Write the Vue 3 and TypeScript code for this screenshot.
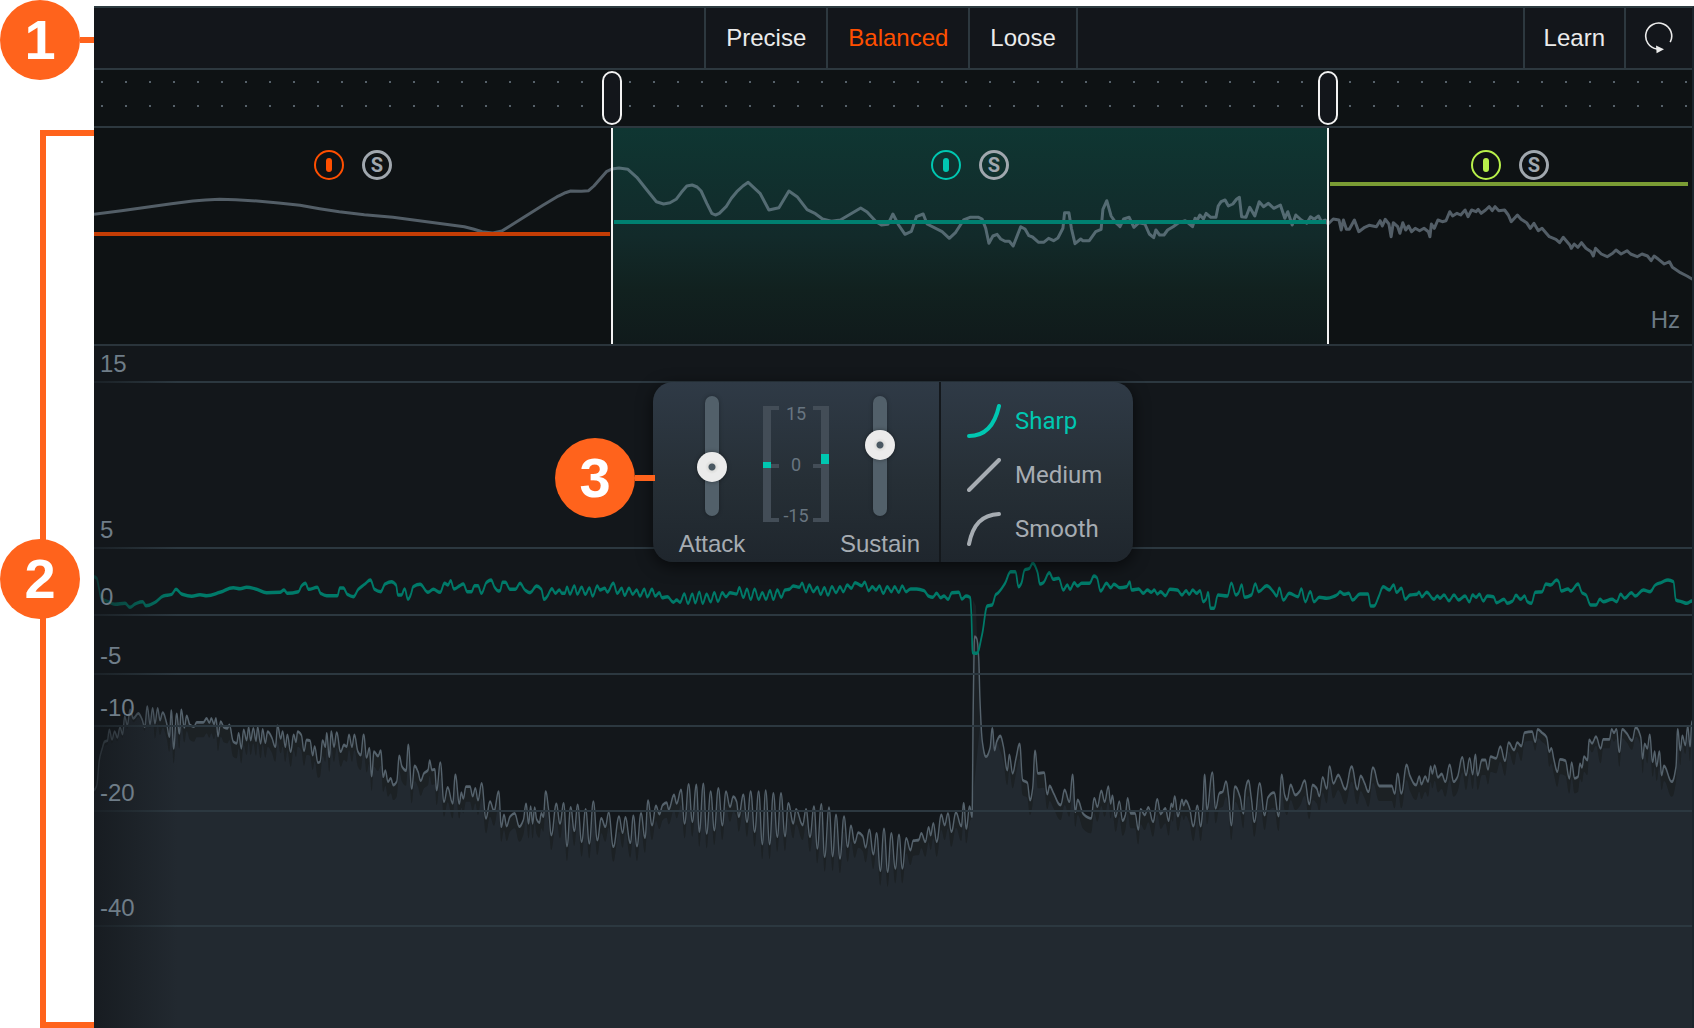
<script setup lang="ts">
import { ref } from 'vue'

interface TraceWindow {
  x: number
  y: number
  kx: number
  ky: number
  data: string
}
type Point = [number, number]

const modes = ['Precise', 'Balanced', 'Loose'] as const
const activeMode = ref<string>('Balanced')

const bands = [
  { name: 'Low', span: 518, color: '#ff4f00', line: '#c43d05', level: 104, selected: false },
  { name: 'Mid', span: 716, color: '#00c7b1', line: '#008070', level: 92, selected: true },
  { name: 'High', span: 364, color: '#b8f04a', line: '#7a9c34', level: 54, selected: false },
]
const totalSpan = bands.reduce((sum, b) => sum + b.span, 0)
const crossovers = [518, 1234].map((v) => (v / totalSpan) * 100)

const gridRows = [
  { label: '15', span: 37 },
  { label: '5', span: 166 },
  { label: '0', span: 67 },
  { label: '-5', span: 59 },
  { label: '-10', span: 52 },
  { label: '-20', span: 85 },
  { label: '-40', span: 115 },
]
const rowTemplate = [...gridRows.map((r) => r.span), 101].map((n) => `minmax(0, ${n}fr)`).join(' ')

const attack = ref(-3.7)
const sustain = ref(3.7)
const shapes = [
  { name: 'Sharp', path: 'M2 32 C19 32 28 20 32 2' },
  { name: 'Medium', path: 'M2 32 L32 2' },
  { name: 'Smooth', path: 'M2 32 C6 12 15 3 32 2' },
]
const activeShape = ref('Sharp')

// Each window holds samples on its own fine grid: origin plus samples per pixel.
const spectrum: TraceWindow[] = [
  { x: 0, y: 0, kx: 2.8, ky: 3, data: '263,643 340,632 420,620 480,611 540,603 575,600 615,598 660,599 720,603 780,609 840,616 895,626 950,635 1020,644 1100,652 1200,666 1300,680 1325,687 1350,695 1380,699 1405,693 1440,670 1480,643 1520,616 1560,590' },
  { x: 560, y: 0, kx: 2.8, ky: 3, data: '0,586 15,578 30,573 60,574 80,572 95,558 130,515 145,507 165,504 190,508 215,532 245,572 270,605 290,612 308,608 325,598 340,577 355,558 370,555 384,561 395,573 411,610 425,640 435,645 446,640 465,620 480,595 495,575 512,558 527,547 560,580 585,630 613,623 641,573 664,590 692,629 715,641 735,657 760,664 785,660 842,624 860,636 885,665 900,675 918,673 932,642 948,675 966,703 984,694 998,650 1017,642 1028,672 1070,695 1090,715 1108,697 1130,660 1148,652 1172,652 1182,657 1192,685 1201,730 1212,708 1224,703 1234,717 1246,724 1258,724 1269,738 1290,680 1302,687 1313,707 1323,711 1340,727 1354,727 1368,715 1382,722 1394,714 1408,685 1413,638 1425,638 1432,685 1442,731 1458,717 1464,722 1482,722 1500,695 1515,688 1520,628 1531,602 1543,648 1556,668 1566,678' },
  { x: 1120, y: 0, kx: 2.73, ky: 3, data: '0,680 10,657 25,652 38,682 52,668 68,672 80,702 92,713 98,690 108,705 120,705 130,690 145,680 160,668 178,662 198,680 205,655 212,658 218,645 228,657 235,640 248,652 262,652 268,618 276,605 287,600 296,618 308,612 318,598 326,592 332,650 344,652 354,622 368,648 380,605 392,620 405,610 420,625 438,615 450,655 458,635 470,675 480,645 495,660 510,670 520,650 530,658 542,648 550,665 560,660 568,672 582,657 598,660 604,690 610,660 618,688 626,688 640,660 652,695 668,682 680,676 700,680 710,662 716,678 724,658 734,672 740,710 746,668 758,680 764,700 772,668 780,690 788,678 796,695 806,685 818,692 830,685 842,695 846,710 850,672 858,685 868,660 880,665 890,662 900,635 908,648 920,640 930,645 942,630 950,650 960,630 972,635 978,628 986,640 998,630 1008,620 1016,632 1024,620 1034,632 1050,630 1060,645 1068,665 1085,645 1095,658 1110,668 1120,685 1130,670 1142,692 1152,685 1172,710 1190,718 1200,728 1210,712 1228,735 1232,745 1240,732 1250,742 1260,728 1272,745 1286,755 1292,768 1298,745 1314,762 1330,770 1345,760 1354,750 1368,762 1384,752 1394,762 1412,770 1425,762 1440,768 1450,782 1458,768 1470,778 1486,792 1500,785 1508,802 1530,818 1548,828 1563,838' },
]

const gain: TraceWindow[] = [
  { x: 0, y: 340, kx: 3, ky: 3, data: '282,710 290,715 296,740 304,775 325,785 345,793 375,790 390,802 405,792 428,785 438,797 465,787 490,768 515,763 528,748 545,762 575,769 600,764 620,767 660,757 700,743 720,746 740,742 770,748 800,758 840,757 852,750 862,760 895,755 905,737 916,730 926,748 952,742 962,760 980,767 1012,767 1020,744 1030,744 1042,763 1060,770 1075,748 1095,732 1111,720 1124,748 1142,755 1155,732 1175,725 1188,735 1194,765 1204,765 1214,747 1224,778 1232,765 1240,740 1260,733 1284,757 1300,748 1320,757 1334,730 1344,735 1352,722 1362,747 1378,738 1390,732 1402,755 1414,755 1424,737 1434,737 1444,760 1460,727 1473,720 1484,742 1495,753' },
  { x: 500, y: 540, kx: 3, ky: 3, data: '0,152 8,127 16,127 30,148 46,148 60,130 75,150 90,158 110,138 124,148 132,178 140,172 156,146 166,160 178,150 186,160 194,160 201,142 210,162 223,138 232,162 245,142 256,163 268,144 278,168 292,138 300,150 314,145 322,156 340,130 352,160 365,145 374,166 387,145 398,163 410,150 420,168 433,148 442,170 456,148 466,168 478,158 486,173 502,170 520,187 530,180 540,187 553,162 564,190 577,163 586,188 598,157 608,190 620,163 632,185 643,158 654,184 667,158 678,170 690,158 710,162 718,143 730,172 741,148 752,178 764,148 776,178 787,158 798,178 810,152 820,178 832,150 844,172 855,150 868,148 880,138 898,142 906,130 918,155 928,135 940,155 952,142 962,163 973,143 984,165 996,140 1008,158 1020,140 1030,155 1042,135 1054,145 1065,128 1085,137 1094,127 1106,152 1117,140 1128,150 1138,138 1150,160 1162,140 1174,155 1184,140 1196,157 1207,138 1218,155 1232,147 1250,147 1272,152 1285,168 1298,172 1310,160 1322,173 1332,168 1344,178 1356,158 1376,157 1386,177 1398,168 1410,172 1414,220 1418,338 1430,340 1446,285 1462,198 1476,195 1488,163' },
  { x: 940, y: 540, kx: 3, ky: 3, data: '170,162 195,130 212,95 226,95 236,140 244,130 254,90 268,85 278,70 292,95 300,132 310,128 328,98 340,118 356,115 370,150 382,135 390,148 403,128 412,138 425,130 448,130 462,108 470,112 482,153 500,130 512,143 522,133 540,143 560,140 569,126 575,150 596,147 610,160 622,150 634,157 643,150 652,162 662,155 676,167 690,148 712,150 726,165 738,152 748,163 758,150 770,160 780,152 790,185 798,178 804,158 812,205 822,205 834,165 862,168 874,130 888,165 896,158 905,135 914,172 934,165 946,132 956,155 980,137 1000,155 1010,168 1018,145 1030,180 1048,160 1074,170 1084,147 1096,185 1111,155 1122,185 1138,172 1160,175 1185,168 1194,162' },
  { x: 1300, y: 540, kx: 3, ky: 3, data: '120,155 132,163 146,160 158,180 180,162 204,162 212,198 222,198 236,170 250,140 268,150 281,135 290,157 304,145 316,178 330,165 350,163 357,157 366,170 380,157 402,178 412,168 420,175 432,165 447,182 462,165 476,180 495,168 508,185 518,165 528,172 538,163 550,183 562,168 580,170 590,188 612,178 622,190 638,183 648,166 662,178 674,168 682,185 694,190 706,157 726,155 738,132 752,135 770,120 776,125 784,153 804,147 812,153 834,132 846,158 858,165 872,195 888,195 900,178 910,185 936,178 950,185 962,163 974,175 994,158 1006,168 1030,150 1050,155 1066,135 1085,127 1104,120 1120,125 1128,180 1145,185 1160,190 1176,183' },
]

const level: TraceWindow[] = [
  { x: 90, y: 680, kx: 3, ky: 3, data: '12,330 20,318 28,240 36,208 44,185 52,182 58,150 66,178 74,155 82,172 90,143 98,162 104,110 112,135 120,90 130,115 145,100 156,118 164,140 172,80 180,132 188,85 195,130 203,85 210,120 218,98 230,130 238,170 244,92 251,205 260,102 268,160 274,90 283,142 290,108 300,135 312,140 320,127 340,127 350,115 358,128 364,115 372,132 378,115 384,168 392,125 402,142 412,145 418,135 430,185 440,190 446,160 454,205 461,150 470,180 476,142 482,180 490,145 498,182 503,142 512,190 518,148 526,188 533,155 545,172 556,200 563,138 572,175 578,155 586,200 592,165 602,215 611,165 618,185 623,155 634,165 642,212 650,180 660,182 668,225 674,200 684,248 690,245 698,182 706,200 710,160 718,230 724,155 732,200 740,158 752,215 762,195 770,200 777,165 786,200 793,165 804,215 812,225 821,165 830,232 838,205 845,288 852,215 864,228 872,212 880,290 886,272 894,305 902,295 910,315 920,305 928,228 936,260 948,272 955,195 965,325 974,258 984,275 992,302 1002,280 1014,270 1019,242 1026,270 1034,268 1040,330 1051,248 1062,365 1073,322 1088,370 1096,285 1108,370 1114,338 1120,355 1128,320 1140,320 1148,348 1156,325 1164,360 1175,310 1188,415 1200,365 1212,392 1226,335 1234,440 1242,405 1250,438' },
  { x: 500, y: 540, kx: 3, ky: 3, data: '30,830 44,820 58,860 70,840 78,792 86,850 92,800 98,850 104,803 110,838 118,848 124,820 130,830 137,755 146,810 154,885 169,792 180,850 191,790 201,918 212,802 223,872 233,795 245,905 257,808 268,910 280,785 292,900 304,835 316,860 326,818 340,920 357,830 368,878 376,832 391,908 400,828 411,918 423,820 435,893 444,782 456,855 468,798 478,822 488,795 500,788 506,808 522,765 530,790 543,750 554,850 566,733 577,845 589,735 598,875 610,732 620,880 632,755 643,870 655,745 667,855 678,755 690,800 700,770 710,785 716,830 730,765 741,845 752,755 764,875 776,755 787,912 797,752 809,912 820,760 832,890 843,760 855,888 865,790 880,850 888,808 908,855 918,808 930,890 942,800 952,925 964,793 974,950 987,803 998,948 1008,825 1020,955 1032,830 1043,920 1053,858 1064,908 1075,878 1088,888 1097,922 1108,870 1120,942 1130,880 1141,992 1152,867 1163,995 1174,880 1186,985 1197,885 1207,985 1219,895 1231,930 1240,902 1256,900 1264,880 1276,905 1286,862 1292,885 1300,850 1310,905 1324,825 1334,855 1344,820 1354,875 1368,818 1384,858 1391,790 1399,865 1409,800 1416,830 1420,480 1424,290 1430,295 1436,350 1440,480 1447,605 1458,650 1470,625 1477,565 1484,630' },
  { x: 940, y: 540, kx: 3, ky: 3, data: '170,605 181,588 190,618 202,690 208,645 218,700 228,655 239,612 248,720 262,728 270,780 278,745 285,633 294,700 312,698 322,762 329,738 340,758 362,795 374,750 388,785 398,705 406,815 413,780 430,822 453,835 463,775 472,800 484,753 494,785 505,740 512,790 517,768 527,830 538,785 548,842 556,825 563,775 572,820 585,820 595,868 602,808 614,825 625,802 639,845 652,778 662,822 676,805 686,842 694,792 698,800 704,770 714,828 726,780 731,795 737,782 748,802 760,858 772,798 782,858 788,810 794,705 801,808 817,698 827,805 838,760 848,755 858,725 866,770 874,855 885,740 900,770 910,820 916,750 925,722 934,775 943,845 959,730 974,825 984,772 1002,758 1016,828 1025,705 1034,765 1041,780 1052,735 1066,765 1080,752 1094,722 1108,792 1118,735 1130,745 1138,768 1148,712 1160,745 1169,680 1180,730 1195,705' },
  { x: 1300, y: 540, kx: 3, ky: 3, data: '120,712 136,748 155,680 172,748 182,708 194,730 205,755 219,683 238,738 275,738 284,760 293,702 304,760 320,675 330,708 348,735 358,710 364,732 376,710 384,725 392,680 397,700 404,677 414,712 425,702 436,725 449,675 461,725 472,712 487,652 498,705 509,655 518,702 526,645 533,705 546,660 556,660 564,688 572,650 588,655 601,620 615,662 626,608 642,630 652,608 664,618 674,578 696,575 706,605 713,568 726,578 740,592 748,635 754,625 762,660 772,695 780,658 796,662 808,715 815,668 824,715 834,710 840,672 846,682 852,650 862,660 868,600 876,610 888,590 902,625 910,598 928,598 935,568 942,578 949,568 958,635 967,568 980,580 996,602 1007,563 1022,590 1028,655 1034,612 1042,625 1049,585 1058,665 1064,635 1070,678 1078,635 1085,705 1092,678 1115,725 1128,680 1133,568 1141,630 1147,588 1156,615 1163,560 1170,618 1176,545' },
]

function decode(windows: TraceWindow[], left: number, top: number): Point[] {
  return windows.flatMap((w) =>
    w.data.split(' ').map((pair): Point => {
      const [px, py] = pair.split(',').map(Number)
      return [w.x + px / w.kx - left, w.y + py / w.ky - top]
    }),
  )
}

function toLine(points: Point[]): string {
  return 'M' + points.map(([x, y]) => `${x.toFixed(1)} ${y.toFixed(1)}`).join('L')
}

// Rounded crests and troughs: only turning points get a flat tangent.
function toCurve(points: Point[], stretch = 1): string {
  const slope = points.map(([x, y], i) => {
    const a = points[i - 1]
    const b = points[i + 1]
    if (!a || !b) return 0
    const s1 = (y - a[1]) / (x - a[0])
    const s2 = (b[1] - y) / (b[0] - x)
    return s1 * s2 <= 0 ? 0 : (2 * s1 * s2) / (s1 + s2)
  })
  let d = `M${(points[0][0] * stretch).toFixed(1)} ${points[0][1].toFixed(1)}`
  for (let i = 1; i < points.length; i++) {
    const [x0, y0] = points[i - 1]
    const [x1, y1] = points[i]
    const h = (x1 - x0) / 2.4
    d += `C${((x0 + h) * stretch).toFixed(1)} ${(y0 + slope[i - 1] * h).toFixed(1)} ${((x1 - h) * stretch).toFixed(1)} ${(y1 - slope[i] * h).toFixed(1)} ${(x1 * stretch).toFixed(1)} ${y1.toFixed(1)}`
  }
  return d
}

const spectrumPath = toLine(decode(spectrum, 94, 128))
// The history traces are drawn in a horizontally halved group, so steep runs stay thin.
const gainPath = toCurve(decode(gain, 94, 346), 2)
const levelPoints = decode(level, 94, 346)
const levelPath = toCurve(levelPoints, 2)
const close = 'L1598 682L0 682Z'
const shadePath = toCurve(levelPoints) + close
const bodyPath =
  toCurve(
    levelPoints.map(([x, y]): Point => {
      if (x > 876 && x < 905) return [x, y]
      const drop = x < 60 ? 4 : y < 400 && x > 1400 ? 9 : 15
      return [x, y + drop]
    }),
  ) + close
</script>

<template>
  <div class="page">
    <div class="gutter">
      <div class="callout">
        <span class="badge">1</span>
        <span class="lead"></span>
      </div>
      <div class="bracket">
        <span class="badge bracket-badge">2</span>
      </div>
    </div>

    <main class="plugin">
      <header class="toolbar">
        <nav class="modes" aria-label="Detection mode">
          <button
            v-for="mode in modes"
            :key="mode"
            type="button"
            class="cell"
            :class="{ active: mode === activeMode }"
            @click="activeMode = mode"
          >
            {{ mode }}
          </button>
        </nav>
        <div class="tools">
          <button type="button" class="cell learn">Learn</button>
          <button type="button" class="cell reset" aria-label="Reset">
            <svg width="32" height="32" viewBox="0 0 32 32">
              <path d="M27.2 20.2 A13 13 0 1 0 14 27" fill="none" stroke="#ebebeb" stroke-width="1.6" />
              <path d="M13 23.5 L21 27.2 L13.6 31.2 Z" fill="#ebebeb" />
            </svg>
          </button>
        </div>
      </header>

      <div class="ruler">
        <svg class="dots" aria-hidden="true">
          <defs>
            <pattern id="ruler-dots" width="24" height="24" patternUnits="userSpaceOnUse">
              <rect x="7" y="11" width="2" height="2" fill="#56616a" />
            </pattern>
          </defs>
          <rect width="100%" height="48" fill="url(#ruler-dots)" />
        </svg>
        <button
          v-for="(pos, i) in crossovers"
          :key="i"
          type="button"
          class="handle"
          :aria-label="`Crossover ${i + 1}`"
          :style="{ left: pos + '%' }"
        ></button>
      </div>

      <section class="spectrum">
        <div
          v-for="band in bands"
          :key="band.name"
          class="band"
          :class="{ selected: band.selected }"
          :style="{ flexGrow: band.span }"
        >
          <div class="band-tools">
            <button type="button" class="round" :aria-label="`${band.name} band on`" :style="{ color: band.color }">
              <svg width="30" height="30" viewBox="0 0 30 30">
                <circle cx="15" cy="15" r="14" fill="none" stroke="currentColor" stroke-width="2" />
                <rect x="12" y="8" width="6" height="14" rx="3" fill="currentColor" />
              </svg>
            </button>
            <button type="button" class="round solo">S</button>
          </div>
          <div class="threshold" :style="{ top: band.level + 'px', background: band.line }"></div>
        </div>
        <svg class="overlay" viewBox="0 0 1598 216" preserveAspectRatio="none" aria-hidden="true">
          <path :d="spectrumPath" fill="none" stroke="#98aaba" stroke-opacity=".5" stroke-width="3" stroke-linejoin="round" />
        </svg>
        <div v-for="(pos, i) in crossovers" :key="i" class="divider" :style="{ left: pos + '%' }"></div>
        <span class="unit">Hz</span>
      </section>

      <section class="history">
        <svg class="overlay" viewBox="0 0 1598 682" preserveAspectRatio="none" aria-hidden="true">
          <path :d="shadePath" fill="#1c2124" />
          <path :d="bodyPath" fill="#222930" />
          <path d="M877 470 L879 254 L882 260 L886 380 Z" fill="#1b2024" />
          <g transform="scale(.5 1)" fill="none" stroke-linejoin="round">
            <path :d="levelPath" stroke="#55626c" stroke-width="2.8" />
          </g>
        </svg>
        <div class="grid" aria-hidden="true" :style="{ gridTemplateRows: rowTemplate }">
          <div v-for="row in gridRows" :key="row.label" class="grid-row"></div>
        </div>
        <svg class="overlay" viewBox="0 0 1598 682" preserveAspectRatio="none" aria-hidden="true">
          <g transform="scale(.5 1)" fill="none" stroke-linejoin="round">
            <path :d="gainPath" stroke="#007a69" stroke-width="3.4" />
          </g>
        </svg>
        <div class="fade"></div>
        <div class="labels" :style="{ gridTemplateRows: rowTemplate }">
          <div v-for="row in gridRows" :key="row.label" class="label-row">{{ row.label }}</div>
        </div>

        <div class="popup">
          <div class="callout popup-callout">
            <span class="badge">3</span>
            <span class="lead"></span>
          </div>
          <div class="card">
            <div class="shapers">
              <label class="fader">
                <input v-model.number="attack" type="range" min="-15" max="15" step="0.1" />
                <span>Attack</span>
              </label>
              <div class="meter">
                <svg width="16" height="116" viewBox="0 0 16 116">
                  <path d="M0 0H16V4H8V58H16V62H8V112H16V116H0Z" fill="#434d57" />
                  <rect y="56" width="8" height="6" fill="#00c7b1" />
                </svg>
                <div class="scale"><span>15</span><span>0</span><span>-15</span></div>
                <svg width="16" height="116" viewBox="0 0 16 116">
                  <path d="M16 0H0V4H8V58H0V62H8V112H0V116H16Z" fill="#434d57" />
                  <rect x="8" y="48" width="8" height="10" fill="#00c7b1" />
                </svg>
              </div>
              <label class="fader">
                <input v-model.number="sustain" type="range" min="-15" max="15" step="0.1" />
                <span>Sustain</span>
              </label>
            </div>
            <div class="shapes">
              <label v-for="shape in shapes" :key="shape.name" class="shape" :class="{ active: shape.name === activeShape }">
                <input v-model="activeShape" type="radio" name="shape" :value="shape.name" />
                <svg width="34" height="34" viewBox="0 0 34 34">
                  <path :d="shape.path" fill="none" stroke="currentColor" stroke-width="4" stroke-linecap="round" />
                </svg>
                <span>{{ shape.name }}</span>
              </label>
            </div>
          </div>
        </div>
      </section>
    </main>
  </div>
</template>

<style>
body {
  margin: 0;
  background: #fff;
}
</style>

<style scoped>
.page {
  display: flex;
  min-height: 100vh;
  font: 24px/28px 'Liberation Sans', Arial, sans-serif;
}
button {
  margin: 0;
  padding: 0;
  border: 0;
  background: none;
  color: inherit;
  font: inherit;
  cursor: pointer;
}
svg {
  display: block;
}

/* Callouts */
.gutter {
  flex: none;
  display: flex;
  flex-direction: column;
  gap: 50px;
  width: 94px;
}
.callout {
  display: flex;
  align-items: center;
}
.badge {
  flex: none;
  width: 80px;
  height: 80px;
  border-radius: 50%;
  background: #ff631c;
  color: #fff;
  font-size: 56px;
  font-weight: 700;
  line-height: 80px;
  text-align: center;
}
.lead {
  flex: 1;
  height: 6px;
  background: #ff631c;
}
.bracket {
  position: relative;
  flex: 1;
  display: flex;
  align-items: center;
  margin-left: 40px;
  border: 6px solid #ff631c;
  border-right: 0;
}
.bracket-badge {
  position: absolute;
  left: -46px;
}

/* Plug-in window */
.plugin {
  flex: 1;
  min-width: 0;
  display: flex;
  flex-direction: column;
  margin-top: 6px;
  border-top: 2px solid #2d3b40;
  border-right: 2px solid #1b252c;
  background: #13171b;
}
.toolbar {
  display: grid;
  grid-template-columns: 1fr auto 1fr;
  height: 60px;
  border-bottom: 2px solid #2d383f;
  background: #13161b;
  color: #ebebeb;
}
.modes {
  grid-column: 2;
  display: flex;
  margin-right: 4px;
  border-right: 2px solid #2d383f;
}
.tools {
  display: flex;
  justify-content: flex-end;
}
.cell {
  padding: 0 20px;
  border-left: 2px solid #2d383f;
}
.cell.active {
  color: #ff4f00;
}
.learn {
  padding: 0 19px;
}
.reset {
  padding: 0 17px;
}

.ruler {
  position: relative;
  height: 56px;
  border-bottom: 2px solid #2d383f;
  background: #0e1214;
}
.dots {
  width: 100%;
  height: 56px;
}
.handle {
  position: absolute;
  top: 1px;
  width: 20px;
  height: 54px;
  margin-left: -10px;
  border: 2px solid #f2f2f2;
  border-radius: 10px;
  background: #13161b;
}

/* Spectrum */
.spectrum {
  position: relative;
  display: flex;
  height: 216px;
  border-bottom: 2px solid #2a343b;
  background: #0e1214;
}
.band {
  position: relative;
  flex: 1 1 0;
}
.band.selected {
  background: linear-gradient(#0f3632, #122a2a 50%, #11211f 75%, #101a1b);
}
.band-tools {
  display: flex;
  justify-content: center;
  gap: 18px;
  padding-top: 22px;
}
.round {
  width: 30px;
  height: 30px;
  border-radius: 50%;
}
.solo {
  box-sizing: border-box;
  border: 3px solid #a0a7ae;
  color: #a0a7ae;
  font: 700 20px/24px Roboto, sans-serif;
}
.threshold {
  position: absolute;
  z-index: 1;
  left: 2px;
  right: 2px;
  height: 4px;
}
.band:first-child .threshold {
  left: 0;
}
.band:nth-child(3) .threshold {
  right: 4px;
}
.overlay {
  position: absolute;
  inset: 0;
  width: 100%;
  height: 100%;
  pointer-events: none;
}
.divider {
  position: absolute;
  z-index: 2;
  top: 0;
  bottom: 0;
  width: 2px;
  margin-left: -1px;
  background: #f2f2f2;
}
.unit {
  position: absolute;
  right: 12px;
  bottom: 10px;
  color: #6c7a85;
}

/* History */
.history {
  position: relative;
  flex: 1;
  min-height: 682px;
}
.grid,
.labels {
  position: absolute;
  inset: 0;
  display: grid;
}
.grid-row {
  border-bottom: 2px solid #2c3840;
}
.label-row {
  align-self: end;
  padding: 0 6px 5px;
  color: #6f7d88;
}
.fade {
  position: absolute;
  inset: 0 auto 0 0;
  width: 84px;
  background: linear-gradient(90deg, rgba(19, 23, 27, 0.7), rgba(19, 23, 27, 0));
}

/* Shaper popup */
.popup {
  position: absolute;
  top: 36px;
  left: 50%;
  transform: translateX(-50%);
}
.popup-callout {
  position: absolute;
  z-index: 1;
  top: 56px;
  right: calc(100% - 2px);
  width: 100px;
}
.card {
  display: flex;
  width: 480px;
  height: 180px;
  border-radius: 20px;
  background: linear-gradient(#2f3a46, #262f36 55%, #1f262d);
  box-shadow: 0 4px 16px rgba(0, 0, 0, 0.6);
  color: #a6acb2;
}
.shapers {
  box-sizing: border-box;
  display: grid;
  grid-template-columns: repeat(3, 84px);
  width: 288px;
  padding: 14px 17px 4px;
  border-right: 2px solid #14181c;
}
.fader {
  display: flex;
  flex-direction: column;
  align-items: center;
  gap: 14px;
}
.fader input {
  width: 30px;
  height: 120px;
  margin: 0;
  appearance: none;
  background: none;
  writing-mode: vertical-lr;
  direction: rtl;
}
.fader input::-webkit-slider-runnable-track {
  width: 14px;
  height: 120px;
  margin: 0 8px;
  border-radius: 7px;
  background: #52606a;
  box-shadow: 0 0 4px rgba(0, 0, 0, 0.3);
}
.fader input::-webkit-slider-thumb {
  appearance: none;
  width: 30px;
  height: 30px;
  margin-left: -8px;
  border-radius: 50%;
  background: radial-gradient(circle, #4a5862 0 3px, #dededc 4px, #ebebeb 7px);
  box-shadow: 0 0 4px rgba(0, 0, 0, 0.4);
}
.meter {
  display: flex;
  justify-content: center;
  height: 118px;
  margin-top: 10px;
}
.scale {
  display: flex;
  flex-direction: column;
  justify-content: space-between;
  width: 34px;
  color: #687580;
  font: 18px/16px Roboto, sans-serif;
  text-align: center;
}
.shapes {
  padding: 12px 26px 6px;
}
.shape {
  position: relative;
  display: flex;
  align-items: center;
  gap: 14px;
  height: 54px;
  font-family: Roboto, sans-serif;
}
.shape input {
  position: absolute;
  opacity: 0;
  margin: 0;
}
.shape.active {
  color: #00c7b1;
}
</style>
